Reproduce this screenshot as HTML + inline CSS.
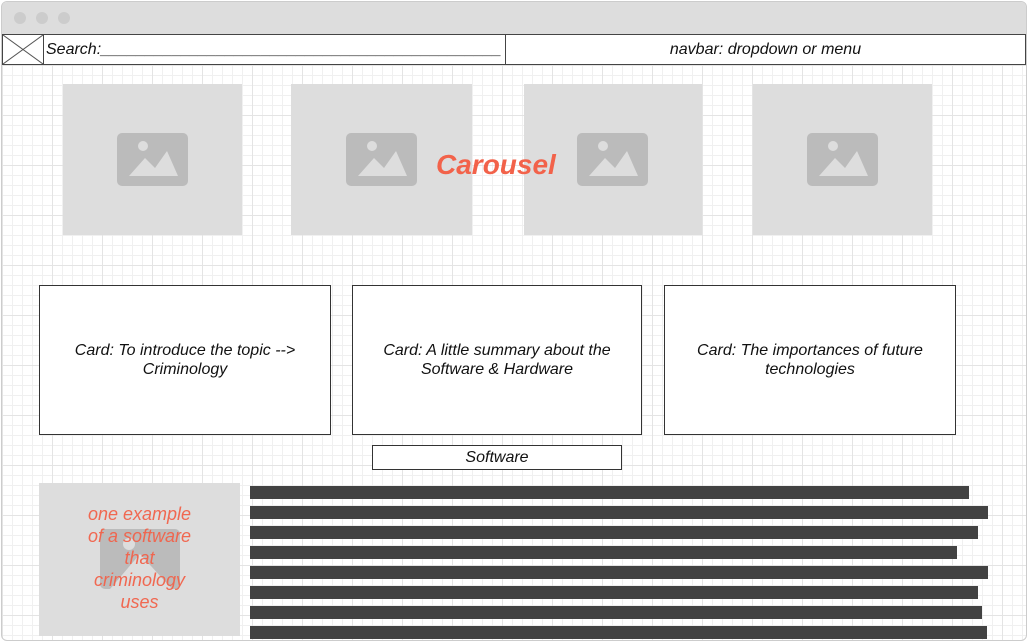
<!DOCTYPE html>
<html><head><style>
*{margin:0;padding:0;box-sizing:border-box}
body{width:1028px;height:636px;overflow:hidden;background:#fff;font-family:"Liberation Sans",sans-serif;font-style:italic;position:relative}
.win{position:absolute;left:1px;top:1px;width:1026px;height:640px;border:1px solid #ccc;border-radius:6px;overflow:hidden;
background-color:#fff;
background-image:linear-gradient(#e4e4e4 1px,transparent 1px),linear-gradient(90deg,#e4e4e4 1px,transparent 1px),linear-gradient(#f0f0f0 1px,transparent 1px),linear-gradient(90deg,#f0f0f0 1px,transparent 1px);
background-size:50px 50px,50px 50px,10px 10px,10px 10px;background-position:0 13px,0 0,0 3px,0 0}
.tb{position:absolute;left:0;top:0;width:100%;height:32px;background:#ddd}
.dot{position:absolute;top:10px;width:12px;height:12px;border-radius:50%;background:#ccc}
.a{position:absolute}
.nav{position:absolute;top:34px;height:31px;border:1px solid #444;background:#fff;font-size:16px;line-height:29px;color:#111}
.img{position:absolute;background:#ddd;top:84px;height:151px}
.ic{position:absolute;left:50%;top:50%;width:71px;height:53px;margin:-27px 0 0 -36px;background:#bbb;border-radius:5px;overflow:hidden}
.card{position:absolute;top:285px;height:150px;border:1px solid #333;background:#fff;display:flex;align-items:center;justify-content:center;text-align:center;font-size:16px;line-height:19px;color:#111;padding:0 20px}
.bar{position:absolute;left:250px;height:13px;background:#424242}
</style></head><body>
<div class="win">
<div class="tb"></div>
<div class="dot" style="left:12px"></div><div class="dot" style="left:34px"></div><div class="dot" style="left:56px"></div>
</div>
<div class="nav" style="left:2px;width:42px"><svg width="40" height="29" style="position:absolute;left:0;top:0"><line x1="0" y1="0" x2="40" y2="29" stroke="#555"/><line x1="40" y1="0" x2="0" y2="29" stroke="#555"/></svg></div>
<div class="nav" style="left:43px;width:463px;padding-left:2px">Search:_____________________________________________</div>
<div class="nav" style="left:505px;width:521px;text-align:center">navbar: dropdown or menu</div>

<div class="img" style="left:63px;width:179px"><div class="ic"><svg width="71" height="53"><circle cx="26" cy="13" r="5" fill="#ddd"/><path d="M12 43 L28 25 L38 35 L50 18 L61 43 Z" fill="#ddd"/></svg></div></div>
<div class="img" style="left:291px;width:181px"><div class="ic"><svg width="71" height="53"><circle cx="26" cy="13" r="5" fill="#ddd"/><path d="M12 43 L28 25 L38 35 L50 18 L61 43 Z" fill="#ddd"/></svg></div></div>
<div class="img" style="left:524px;width:178px"><div class="ic"><svg width="71" height="53"><circle cx="26" cy="13" r="5" fill="#ddd"/><path d="M12 43 L28 25 L38 35 L50 18 L61 43 Z" fill="#ddd"/></svg></div></div>
<div class="img" style="left:753px;width:179px"><div class="ic"><svg width="71" height="53"><circle cx="26" cy="13" r="5" fill="#ddd"/><path d="M12 43 L28 25 L38 35 L50 18 L61 43 Z" fill="#ddd"/></svg></div></div>
<div class="a" style="left:436px;top:149px;font-size:28px;color:#f2624a;font-weight:bold;">Carousel</div>

<div class="card" style="left:39px;width:292px">Card: To introduce the topic --&gt; Criminology</div>
<div class="card" style="left:352px;width:290px">Card: A little summary about the Software &amp; Hardware</div>
<div class="card" style="left:664px;width:292px">Card: The importances of future technologies</div>
<div class="a" style="left:372px;top:445px;width:250px;height:25px;border:1px solid #333;background:#fff;text-align:center;font-size:16px;line-height:24px;color:#111">Software</div>

<div class="a" style="left:39px;top:483px;width:201px;height:153px;background:#ddd">
<div class="a" style="left:61px;top:46px;width:80px;height:60px;background:#bbb;border-radius:5px;overflow:hidden"><svg width="80" height="60"><circle cx="29" cy="15" r="6" fill="#ddd"/><path d="M10 60 L40 25 L72 60 Z" fill="#ddd"/></svg></div>
<div class="a" style="left:0;top:20px;width:201px;text-align:center;color:#f2624a;font-size:18px;line-height:22px;padding:0 42px;opacity:.95">one example of a software that criminology uses</div>
</div>
<div class="bar" style="top:486px;width:719px"></div>
<div class="bar" style="top:506px;width:738px"></div>
<div class="bar" style="top:526px;width:728px"></div>
<div class="bar" style="top:546px;width:707px"></div>
<div class="bar" style="top:566px;width:738px"></div>
<div class="bar" style="top:586px;width:728px"></div>
<div class="bar" style="top:606px;width:732px"></div>
<div class="bar" style="top:626px;width:737px"></div>
</body></html>
